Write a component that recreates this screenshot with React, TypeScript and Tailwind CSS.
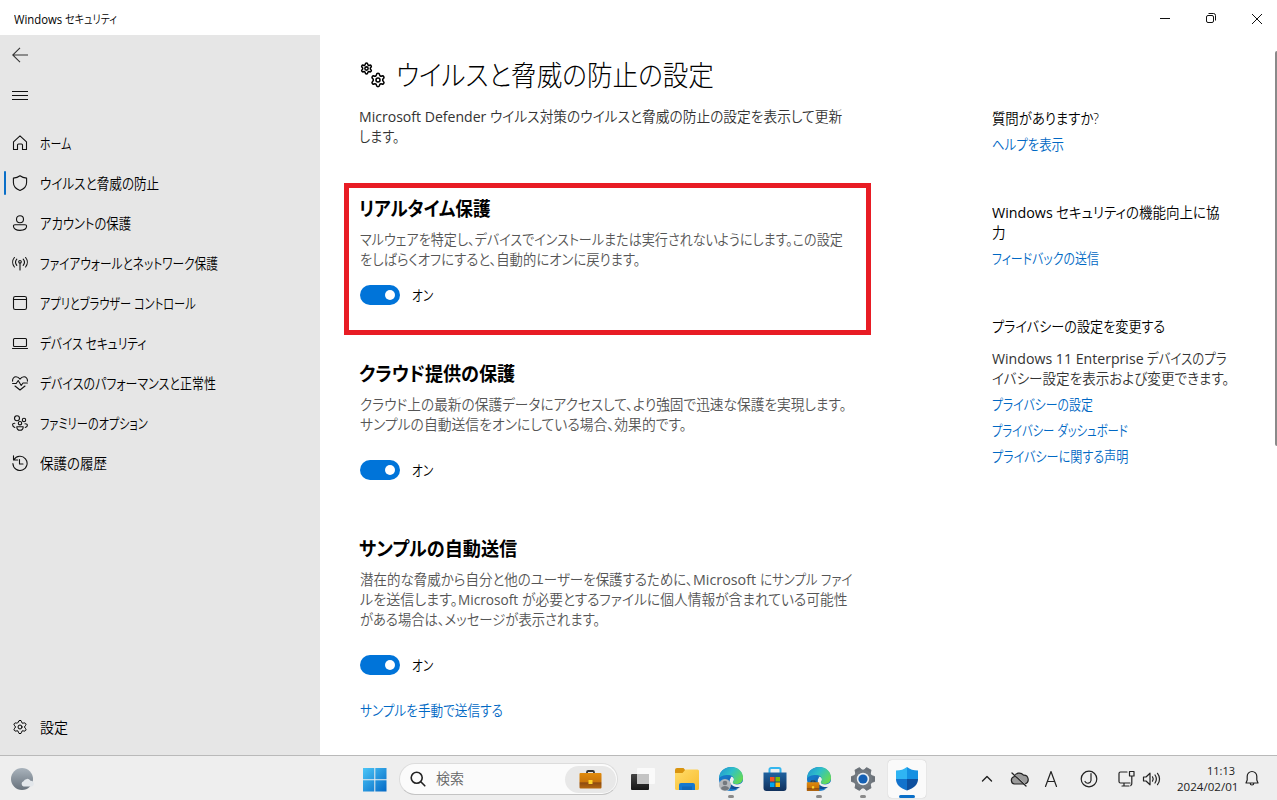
import { useLayoutEffect, useRef, useState } from "react";
import type { ReactNode } from "react";
import { Settings } from "lucide-react";

// --- texto ajustado a un ancho fijo (kana condensado) ---
function Fit({ w, children }: { w: number; children: string }) {
  const ref = useRef<HTMLSpanElement | null>(null);
  const [scale, setScale] = useState<number>(1);
  const latin = /^[ -~]+$/.test(children);

  useLayoutEffect(() => {
    if (ref.current) setScale(w / ref.current.offsetWidth);
  }, [w, children]);

  return (
    <span className={`inline-block align-top ${latin ? "font-normal" : ""}`} style={{ width: w }}>
      <span
        ref={ref}
        className="inline-block origin-left whitespace-pre align-top"
        style={{ transform: `scaleX(${scale})` }}
      >
        {children}
      </span>
    </span>
  );
}

function Icon({ children }: { children: ReactNode }) {
  return (
    <svg
      width="16"
      height="16"
      viewBox="0 0 16 16"
      fill="none"
      stroke="#111"
      strokeWidth="1.1"
      strokeLinecap="round"
      strokeLinejoin="round"
      className="shrink-0"
    >
      {children}
    </svg>
  );
}

const menu = [
  {
    label: "ホーム",
    w: 31,
    icon: <path d="M1.5 6.800 8 .8l6.500 6v7.700h-4V10a1 1 0 0 0-1-1h-3a1 1 0 0 0-1 1v4.500h-4z" />,
  },
  {
    label: "ウイルスと脅威の防止",
    w: 119,
    icon: <path d="M8 .8c2 1.600 4 2.200 6.600 2.300v4.400c0 3.700-2.300 6.300-6.600 7.900C3.700 13.800 1.400 11.200 1.400 7.500V3.100C4 3 6 2.400 8 .8z" />,
  },
  {
    label: "アカウントの保護",
    w: 91,
    icon: (
      <>
        <circle cx="8" cy="4.200" r="3.500" />
        <path d="M3 9.700h10c1 0 1.600.6 1.600 1.400 0 2.600-2.800 4.300-6.600 4.300s-6.600-1.700-6.600-4.300c0-.8.6-1.400 1.600-1.400z" />
      </>
    ),
  },
  {
    label: "ファイアウォールとネットワーク保護",
    w: 178,
    icon: (
      <>
        <path d="M2.400 2.500a7.500 7.500 0 0 0 0 9.500M13.600 2.500a7.500 7.500 0 0 1 0 9.500M4.800 4.200a4.800 4.800 0 0 0 0 6.200M11.200 4.200a4.800 4.800 0 0 1 0 6.200M8 8.500v6.500" />
        <circle cx="8" cy="6.800" r="1.300" />
      </>
    ),
  },
  {
    label: "アプリとブラウザー コントロール",
    w: 156,
    icon: (
      <>
        <rect x="1.500" y="1.500" width="13" height="13" rx="1.800" />
        <path d="M1.500 4.500h13" />
      </>
    ),
  },
  {
    label: "デバイス セキュリティ",
    w: 106,
    icon: (
      <>
        <rect x="1.500" y="3.500" width="13" height="8" rx="1" />
        <path d="M.5 13.500h15" />
      </>
    ),
  },
  {
    label: "デバイスのパフォーマンスと正常性",
    w: 176,
    icon: (
      <path d="M.6 6.200C.3 3.500 2 1.800 4 1.800c1.700 0 2.900.8 4 2.300 1.100-1.500 2.300-2.300 4-2.300 2 0 3.700 1.700 3.400 4.400M.6 8.500h3.600l2-3 3 5 1.800-2.500h4.400M3 11l5 4 5-4" />
    ),
  },
  {
    label: "ファミリーのオプション",
    w: 108,
    icon: (
      <>
        <circle cx="5" cy="3.300" r="2.500" />
        <circle cx="12" cy="5" r="1.700" />
        <circle cx="8" cy="8.200" r="1.700" />
        <path d="M2.800 8.200C1.200 8.200.6 9 .6 9.800c0 1.200.9 2.200 2.200 2.700M13 8.700c1.700 0 2.400.7 2.400 1.500 0 1.200-.9 2-2.200 2.300M4.800 11.700h6.400c0 2.300-1.200 3.600-3.200 3.600s-3.200-1.300-3.200-3.600z" />
      </>
    ),
  },
  {
    label: "保護の履歴",
    w: 67,
    icon: <path d="M1.500.8v4.200h4.200M1.900 4.700A7.100 7.100 0 1 1 .9 8.500M7.500 4.500v4.500h3.500" />,
  },
];

function Toggle() {
  const [on, setOn] = useState<boolean>(true);
  return (
    <div className="flex h-5 items-center gap-3">
      <button
        onClick={() => setOn(!on)}
        className={`flex h-5 w-10 items-center rounded-full px-[5px] ${
          on ? "justify-end bg-[#0074d9]" : "justify-start bg-gray-400"
        }`}
      >
        <span className="size-[10px] rounded-full bg-white" />
      </button>
      <span className="pt-[2px] text-black">
        <Fit w={21}>{on ? "オン" : "オフ"}</Fit>
      </span>
    </div>
  );
}

function Heading({ w, children }: { w: number; children: string }) {
  return (
    <h2 className="-ml-px h-7 text-[19.5px] leading-7 font-bold text-black">
      <Fit w={w}>{children}</Fit>
    </h2>
  );
}

function Link({ w, children }: { w: number; children: string }) {
  return (
    <a className="block h-5 cursor-pointer text-[#0068c4]">
      <Fit w={w}>{children}</Fit>
    </a>
  );
}

// --- iconos de la barra de tareas ---
function Edge({ id, children }: { id: string; children: ReactNode }) {
  return (
    <svg width="26" height="26" viewBox="0 0 26 26">
      <defs>
        <linearGradient id={`${id}-top`} x1="0" y1="0" x2="1" y2=".6">
          <stop offset="0" stopColor="#1f8fd4" />
          <stop offset=".5" stopColor="#2fc0c8" />
          <stop offset="1" stopColor="#63d957" />
        </linearGradient>
        <linearGradient id={`${id}-low`} x1="0" y1="0" x2="1" y2="1">
          <stop offset="0" stopColor="#1a80d0" />
          <stop offset="1" stopColor="#0c3c82" />
        </linearGradient>
      </defs>
      <circle cx="13" cy="13" r="12" fill="#1678c8" />
      <path d="M11.500 11.500c1-1.500 4.500-1 4.500 2 0 1.500-1 2-1 3 0 1.200 1.500 2 4 2 2.500 0 4.500-1 6-3l.5 3.500-3 3.500c-4 .5-9-1-11-6z" fill="#eee" />
      <path d="M1 12.500C1 6 6 1 13 1c7.500 0 12 5 12 10.500 0 4.500-3 6.500-6.500 6.500-3 0-4.500-1-3.300-2.500 2-2.800-.2-6.500-5.200-6.500C5.500 9 2 10.500 1 12.500z" fill={`url(#${id}-top)`} />
      <path d="M11 9.300C6.500 10.500 5.500 15.500 8 19.500c2.500 4 9 5 14.500 1.200-5 1-10-1-10.800-5-.4-2 .4-3.200 1.300-3.700 0-1-.8-2.500-2-2.700z" fill={`url(#${id}-low)`} />
      {children}
    </svg>
  );
}

function Briefcase({ id }: { id: string }) {
  return (
    <g>
      <defs>
        <linearGradient id={id} x1="0" y1="0" x2="0" y2="1">
          <stop offset="0" stopColor="#e08a0c" />
          <stop offset=".6" stopColor="#c8740a" />
          <stop offset=".62" stopColor="#8c4a10" />
          <stop offset="1" stopColor="#b5680e" />
        </linearGradient>
      </defs>
      <path d="M8 4V2.200C8 1.500 8.500 1 9.200 1h4.600c.7 0 1.200.5 1.200 1.200V4" fill="none" stroke="#333" strokeWidth="1.800" />
      <rect x="0.500" y="3" width="22" height="15.500" rx="1" fill={`url(#${id})`} />
      <rect x="9.500" y="10" width="4" height="4" fill="#ffd42a" />
    </g>
  );
}

const apps: { name: string; mark?: string; active?: boolean; icon: ReactNode }[] = [
  {
    name: "taskview",
    icon: (
      <svg width="26" height="26" viewBox="0 0 26 26">
        <defs>
          <linearGradient id="tv" x1="0" y1="0" x2="0" y2="1">
            <stop offset="0" stopColor="#444" />
            <stop offset="1" stopColor="#161616" />
          </linearGradient>
        </defs>
        <rect x="1" y="8" width="18" height="16" rx="1" fill="url(#tv)" />
        <rect x="7" y="2" width="18" height="16" rx="1" fill="#fafafa" />
        <path d="M7 8h12v10H7z" fill="#c4c4c4" />
      </svg>
    ),
  },
  {
    name: "explorer",
    icon: (
      <svg width="26" height="26" viewBox="0 0 26 26">
        <defs>
          <linearGradient id="fold" x1="0" y1="0" x2="1" y2="1">
            <stop offset="0" stopColor="#ffdc6a" />
            <stop offset="1" stopColor="#f9bd2f" />
          </linearGradient>
        </defs>
        <path d="M1 4a2 2 0 0 1 2-2h6.500L12 5v4H1z" fill="#d9940f" />
        <path d="M1 7h7.500L11.500 3.500h12A1.500 1.500 0 0 1 25 5v17.500A1.500 1.500 0 0 1 23.500 24h-21A1.500 1.500 0 0 1 1 22.500z" fill="url(#fold)" />
        <path d="M5 24v-5a2 2 0 0 1 2-2h12a2 2 0 0 1 2 2v5z" fill="#1779cf" />
        <path d="M8 20.500h10v3.500H8z" fill="#1268b8" />
      </svg>
    ),
  },
  {
    name: "edge",
    mark: "w-[6px] bg-[#8a8a8a]",
    icon: (
      <Edge id="e1">
        <circle cx="7" cy="19" r="6" fill="#b4b8bc" />
        <circle cx="7" cy="17" r="2.300" fill="#74797e" />
        <path d="M3 22.500c0-3.500 8-3.500 8 0-1.500 2.500-6.500 2.500-8 0z" fill="#74797e" />
      </Edge>
    ),
  },
  {
    name: "store",
    icon: (
      <svg width="26" height="26" viewBox="0 0 26 26">
        <defs>
          <linearGradient id="store" x1="0" y1="0" x2="0" y2="1">
            <stop offset="0" stopColor="#1f62a0" />
            <stop offset="1" stopColor="#10305c" />
          </linearGradient>
        </defs>
        <path d="M7.500 8V3.500c0-.8.7-1.500 1.500-1.500h8c.8 0 1.500.7 1.500 1.500V8" fill="none" stroke="#35b7ef" strokeWidth="2" />
        <path d="M1.500 6.500h23V22a3 3 0 0 1-3 3h-17a3 3 0 0 1-3-3z" fill="url(#store)" />
        <path d="M8 11h4.500v4.500H8z" fill="#f25022" />
        <path d="M13.500 11H18v4.500h-4.500z" fill="#7fba00" />
        <path d="M8 16.500h4.500V21H8z" fill="#00a4ef" />
        <path d="M13.500 16.500H18V21h-4.500z" fill="#ffb900" />
      </svg>
    ),
  },
  {
    name: "edge-work",
    mark: "w-[6px] bg-[#8a8a8a]",
    icon: (
      <Edge id="e2">
        <g transform="translate(.5 14.500) scale(.57)">
          <Briefcase id="bc-small" />
        </g>
      </Edge>
    ),
  },
  {
    name: "settings",
    mark: "w-[6px] bg-[#8a8a8a]",
    icon: (
      <svg width="26" height="26" viewBox="0 0 26 26">
        {[0, 60, 120, 180, 240, 300].map((a) => (
          <path key={a} d="M9.500 5 10.500 1.500h5L16.500 5z" fill="#6b7178" stroke="#6b7178" strokeLinejoin="round" transform={`rotate(${a + 30} 13 13)`} />
        ))}
        <circle cx="13" cy="13" r="9.500" fill="#727980" />
        <circle cx="13" cy="13" r="6.200" fill="#e9eef3" />
        <circle cx="13" cy="13" r="4.600" fill="#1460b4" />
      </svg>
    ),
  },
  {
    name: "security",
    active: true,
    mark: "w-4 bg-[#0a6fc8]",
    icon: (
      <svg width="26" height="26" viewBox="0 0 26 26">
        <path d="M13 1c3 2.500 6.500 3.500 11 3.500V13H13z" fill="#1590e2" />
        <path d="M13 1C10 3.500 6.500 4.500 2 4.500V13h11z" fill="#2fb4f3" />
        <path d="M2 13h11v11.500C6 22 2 18.500 2 13z" fill="#1272cc" />
        <path d="M24 13H13v11.500c7-2.500 11-6 11-11.500z" fill="#0d4f9e" />
      </svg>
    ),
  },
];

export default function App() {
  return (
    <div className="flex h-[800px] w-full flex-col overflow-hidden bg-white font-['Open_Sans','Noto_Sans_CJK_JP',sans-serif] text-[14.5px] leading-5 font-[350] text-black [font-feature-settings:'palt']">
      {/* Barra de título */}
      <header className="flex h-[35px] shrink-0 items-center justify-between pt-1 pl-[14px]">
        <span className="text-xs leading-5">
          <Fit w={51}>{"Windows "}</Fit>
          <Fit w={52}>セキュリティ</Fit>
        </span>
        <svg width="120" height="16" viewBox="0 0 120 16" fill="none" stroke="#111" className="mr-1 mb-px">
          <path d="M7 7.500h10" />
          <rect x="53.500" y="4.500" width="7" height="7" rx="1.500" />
          <path d="M55.500 2.500h5a2 2 0 0 1 2 2v5" />
          <path d="m99 3 10 10M109 3 99 13" />
        </svg>
      </header>

      <div className="flex h-[720px] shrink-0">
        {/* Menú lateral */}
        <aside className="flex w-80 shrink-0 flex-col bg-[#e6e6e6]">
          <div className="flex h-10 items-center pl-3">
            <svg width="16" height="16" viewBox="0 0 16 16" fill="none" stroke="#333" strokeWidth="1.100">
              <path d="M.7 8H16M8 .8.700 8 8 15.200" />
            </svg>
          </div>
          <div className="flex h-12 items-start pt-[13px] pl-3">
            <svg width="16" height="16" viewBox="0 0 16 16" stroke="#111">
              <path d="M0 3.500h16M0 7.500h16M0 11.500h16" />
            </svg>
          </div>
          <nav>
            {menu.map((item, i) => (
              <a key={item.label} className="flex h-10 cursor-pointer items-center">
                <span className={`ml-1 h-6 w-[2px] rounded ${i === 1 ? "bg-[#0a6fc8]" : ""}`} />
                <span className="ml-[6px]">
                  <Icon>{item.icon}</Icon>
                </span>
                <span className="mt-px ml-3">
                  <Fit w={item.w}>{item.label}</Fit>
                </span>
              </a>
            ))}
          </nav>
          <a className="mt-auto mb-2 flex h-10 cursor-pointer items-center gap-3 pl-3">
            <Settings size={16} strokeWidth={1.5} />
            <span className="pt-px">
              <Fit w={28}>設定</Fit>
            </span>
          </a>
        </aside>

        {/* Contenido */}
        <main className="w-[551px] shrink-0 pl-6">
          <div className="flex h-[72px] items-center gap-[10px] pt-2 pl-4">
            <div className="relative h-[26px] w-[26px]">
              <Settings size={13} strokeWidth={2.8} className="absolute top-0 left-0" />
              <Settings size={16} strokeWidth={2.3} className="absolute right-0 bottom-0" />
            </div>
            <h1 className="pb-px text-[28px] leading-10 font-light">
              <Fit w={318}>ウイルスと脅威の防止の設定</Fit>
            </h1>
          </div>
          <div className="pl-[15px] text-[#333]">
            <div>
              <Fit w={131}>{"Microsoft Defender "}</Fit>
              <Fit w={352}>ウイルス対策のウイルスと脅威の防止の設定を表示して更新</Fit>
            </div>
            <div>
              <Fit w={41}>します。</Fit>
            </div>
          </div>

          <section className="mt-9 h-[152px] w-[527px] border-[5px] border-[#e81c24] pt-[7px] pl-[11px] text-[#555]">
            <Heading w={132}>リアルタイム保護</Heading>
            <div className="mt-[7px]">
              <Fit w={483}>マルウェアを特定し、デバイスでインストールまたは実行されないようにします。この設定</Fit>
              <Fit w={280}>をしばらくオフにすると、自動的にオンに戻ります。</Fit>
              <div className="mt-[15px]">
                <Toggle />
              </div>
            </div>
          </section>

          <section className="mt-[25px] pl-4 text-[#555]">
            <Heading w={156}>クラウド提供の保護</Heading>
            <div className="mt-[7px]">
              <Fit w={486}>クラウド上の最新の保護データにアクセスして、より強固で迅速な保護を実現します。</Fit>
              <Fit w={327}>サンプルの自動送信をオンにしている場合、効果的です。</Fit>
            </div>
            <div className="mt-[25px]">
              <Toggle />
            </div>
          </section>

          <section className="mt-[55px] pl-4 text-[#555]">
            <Heading w={158}>サンプルの自動送信</Heading>
            <div className="mt-[7px]">
              <div>
                <Fit w={333}>潜在的な脅威から自分と他のユーザーを保護するために、</Fit>
                <Fit w={67}>{"Microsoft "}</Fit>
                <Fit w={92}>にサンプル ファイ</Fit>
              </div>
              <div>
                <Fit w={98}>ルを送信します。</Fit>
                <Fit w={64}>{"Microsoft "}</Fit>
                <Fit w={326}>が必要とするファイルに個人情報が含まれている可能性</Fit>
              </div>
              <Fit w={240}>がある場合は、メッセージが表示されます。</Fit>
            </div>
            <div className="mt-[25px]">
              <Toggle />
            </div>
            <div className="mt-[26px]">
              <Link w={143}>サンプルを手動で送信する</Link>
            </div>
          </section>
        </main>

        {/* Columna derecha */}
        <aside className="ml-[121px] w-[283px] shrink-0 pt-[74px]">
          <Fit w={107}>質問がありますか?</Fit>
          <div className="mt-[6px]">
            <Link w={72}>ヘルプを表示</Link>
          </div>
          <div className="mt-12">
            <div>
              <Fit w={64}>{"Windows "}</Fit>
              <Fit w={163}>セキュリティの機能向上に協</Fit>
            </div>
            <Fit w={14}>力</Fit>
          </div>
          <div className="mt-[6px]">
            <Link w={107}>フィードバックの送信</Link>
          </div>
          <div className="mt-12">
            <Fit w={173}>プライバシーの設定を変更する</Fit>
          </div>
          <div className="mt-3 text-[#333]">
            <div>
              <Fit w={155}>{"Windows 11 Enterprise "}</Fit>
              <Fit w={80}>デバイスのプラ</Fit>
            </div>
            <Fit w={237}>イバシー設定を表示および変更できます。</Fit>
          </div>
          <div className="mt-[6px] flex flex-col gap-[6px]">
            <Link w={101}>プライバシーの設定</Link>
            <Link w={136}>プライバシー ダッシュボード</Link>
            <Link w={136}>プライバシーに関する声明</Link>
          </div>
        </aside>
        <div className="mt-4 h-[395px] w-[2px] rounded-l bg-[#8a8a8a]" />
      </div>

      {/* Barra de tareas */}
      <footer className="flex h-[45px] shrink-0 items-center border-t border-[#b9b9b9] bg-[#eeeeee]">
        <div className="w-[351px] shrink-0 pt-[3px] pl-[11px]">
          <svg width="24" height="24" viewBox="0 0 24 24">
            <defs>
              <linearGradient id="moon" x1="0" y1="0" x2="0" y2="1">
                <stop offset="0" stopColor="#a9b3bc" />
                <stop offset="1" stopColor="#68727c" />
              </linearGradient>
            </defs>
            <circle cx="11" cy="11" r="11" fill="url(#moon)" />
            <path d="M12.500 18.500a2.800 2.800 0 0 1 0-5.300 4 4 0 0 1 7-.5 2.900 2.900 0 0 1 .8 5.800z" fill="#e3e7eb" />
          </svg>
        </div>
        <svg width="24" height="24" viewBox="0 0 24 24" className="mt-[3px] ml-3 shrink-0">
          <defs>
            <linearGradient id="win" x1="0" y1="0" x2="1" y2="1">
              <stop offset="0" stopColor="#4cc6f7" />
              <stop offset="1" stopColor="#0369c6" />
            </linearGradient>
          </defs>
          <path d="M0 0h11.300v11.300H0zM12.300 0H23.500v11.300H12.300zM0 12.300h11.300v11.200H0zM12.300 12.300h11.200v11.200H12.300z" fill="url(#win)" />
        </svg>
        <div className="mt-[2px] ml-3 flex h-8 w-[219px] shrink-0 items-center rounded-full border border-[#dcdcdc] border-b-[#c4c4c4] bg-[#fbfbfb] pl-[10px]">
          <svg width="16" height="16" viewBox="0 0 16 16" fill="none" stroke="#222" strokeWidth="1.600" strokeLinecap="round">
            <circle cx="6.700" cy="6.700" r="5.500" />
            <path d="m10.800 10.800 4 4" />
          </svg>
          <span className="ml-[10px] text-[#666]">
            <Fit w={28}>検索</Fit>
          </span>
          <span className="mr-px ml-auto flex h-[27px] w-[51px] items-center justify-center rounded-full bg-[#e8e8e8]">
            <svg width="23" height="19" viewBox="0 0 23 19">
              <Briefcase id="bc" />
            </svg>
          </span>
        </div>
        <div className="mt-[2px] ml-[6px] flex gap-[6px]">
          {apps.map((app) => (
            <div
              key={app.name}
              className={`flex h-[38px] w-[38px] flex-col items-center rounded pt-[6px] ${
                app.active ? "bg-[#fafafa] shadow-[0_0_1px_#aaa]" : ""
              }`}
            >
              {app.icon}
              {app.mark && <span className={`mt-[3px] h-[3px] rounded-full ${app.mark}`} />}
            </div>
          ))}
        </div>

        {/* Bandeja del sistema */}
        <div className="mt-[2px] ml-auto flex items-center pr-[18px]">
          <svg width="182" height="24" viewBox="0 0 182 24" fill="none" stroke="#222" strokeWidth="1.200" strokeLinecap="round" strokeLinejoin="round">
            <path d="m2.500 14 4.500-4.500 4.500 4.500" strokeWidth="1.400" />
            <path d="M34.500 17a3.700 3.700 0 0 1-.5-7.200 5.500 5.500 0 0 1 9.500-1.600 4.500 4.500 0 0 1 1.500 8.800z" fill="#9a9a9a" />
            <path d="m33 6.500 13 12" stroke="#eee" />
            <path d="m32 6 14 13" strokeWidth="1.300" />
            <path d="m65.500 19.500 5.500-15 5.500 15M67.300 14.500h7.400" />
            <circle cx="109" cy="12" r="7.800" />
            <path d="M111 6.500v7a3.200 3.200 0 0 1-6 1" />
            <path d="M147 5h-6.500a1.500 1.500 0 0 0-1.500 1.500v8a1.500 1.500 0 0 0 1.500 1.500h9.500M144 16v3M149 19h-7M149.500 4.500h4.500v4.500h-4.500zM151.800 9v6.500a3 3 0 0 1-1 3" />
            <path d="M163.500 10h2.500l4-3.800v11.600l-4-3.800h-2.500zM172.500 9.800a4 4 0 0 1 0 4.400M175 8a7 7 0 0 1 0 8M177.500 6.300a9 9 0 0 1 0 11.400" />
          </svg>
          <div className="mr-[2px] ml-[11px] w-[62px] text-right text-[11px] leading-[16px] text-[#222]">
            <Fit w={28}>11:13</Fit>
            <Fit w={61}>2024/02/01</Fit>
          </div>
          <svg width="14" height="18" viewBox="0 0 14 18" fill="none" stroke="#222" strokeWidth="1.200" strokeLinejoin="round" className="ml-2">
            <path d="M7 1.500a4.800 4.800 0 0 0-4.800 4.800V10L1 13h12l-1.200-3V6.300A4.800 4.800 0 0 0 7 1.500zM5.200 13.200a1.800 1.800 0 0 0 3.600 0" />
          </svg>
        </div>
      </footer>
    </div>
  );
}
